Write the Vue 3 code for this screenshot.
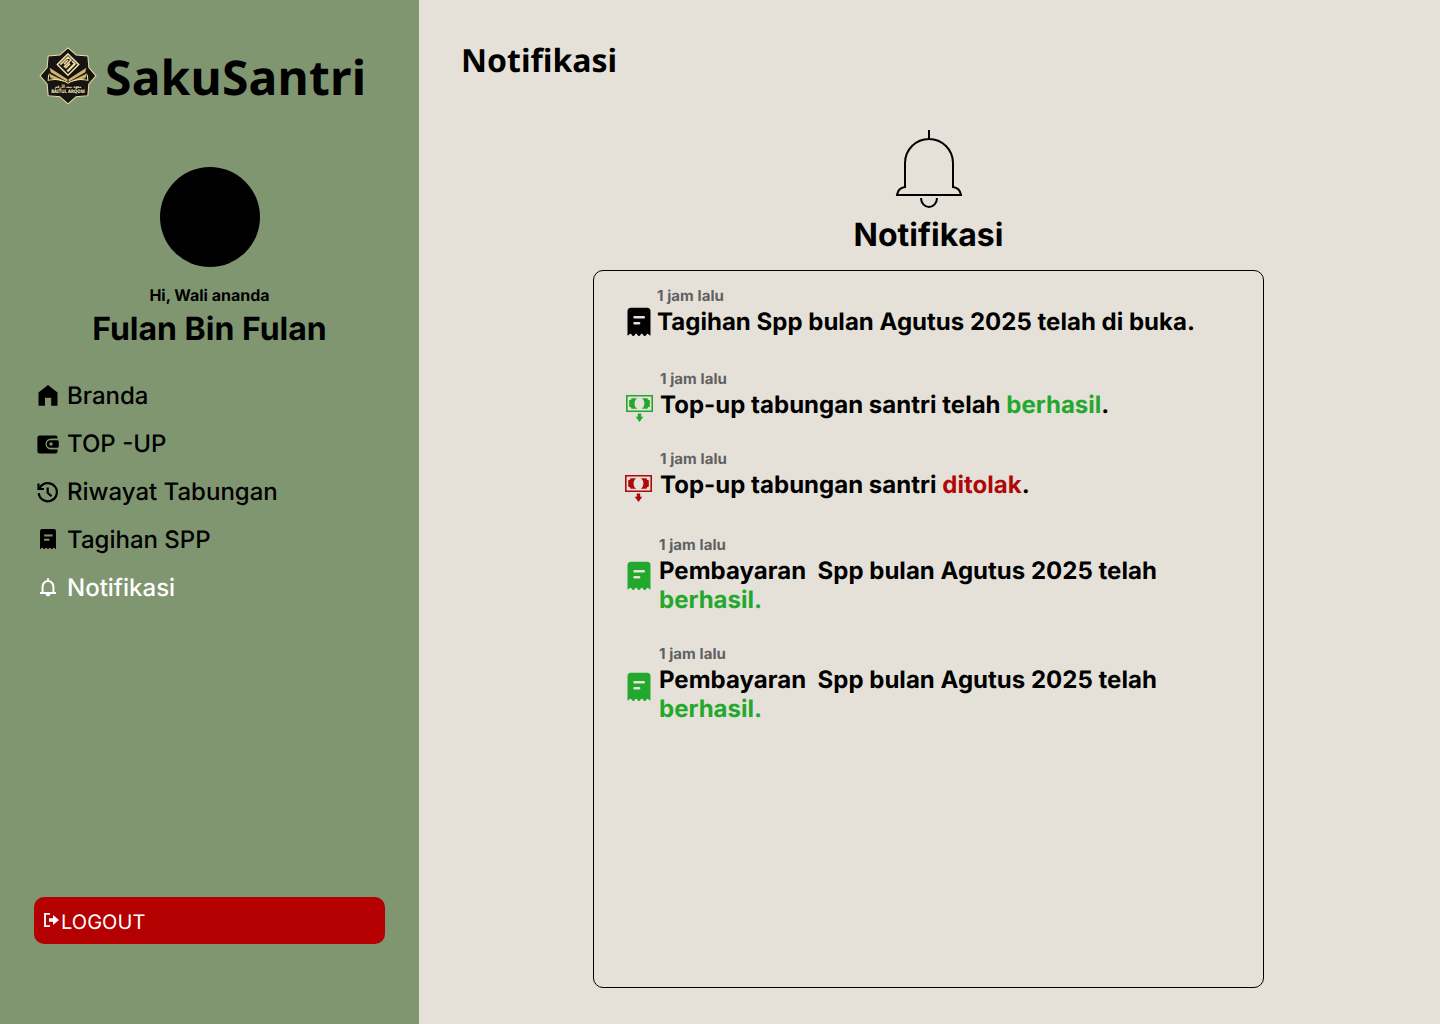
<script setup>
const menu = [
  { label: 'Branda', icon: 'home' },
  { label: 'TOP -UP', icon: 'wallet' },
  { label: 'Riwayat Tabungan', icon: 'history' },
  { label: 'Tagihan SPP', icon: 'receipt' },
  { label: 'Notifikasi', icon: 'bell', active: true },
]

const items = [
  { icon: 'receipt', tone: 'black', text: 'Tagihan Spp bulan Agutus 2025 telah di buka.', gap: 0, indent: 64, left: 33, iconTop: 20 },
  { icon: 'cash', tone: 'green', text: 'Top-up tabungan santri telah ', status: 'berhasil', end: '.', gap: 34, indent: 67, left: 32, iconTop: 25 },
  { icon: 'cash', tone: 'red', text: 'Top-up tabungan santri ', status: 'ditolak', end: '.', gap: 31, indent: 67, left: 31, iconTop: 25 },
  { icon: 'receipt', tone: 'green', text: 'Pembayaran  Spp bulan Agutus 2025 telah\n', status: 'berhasil.', gap: 37, indent: 66, left: 33, iconTop: 25 },
  { icon: 'receipt', tone: 'green', text: 'Pembayaran  Spp bulan Agutus 2025 telah\n', status: 'berhasil.', gap: 31, indent: 66, left: 33, iconTop: 27 },
]
</script>

<template>
  <div class="page">
    <aside class="sidebar">
      <div class="brand">
        <svg class="logo" viewBox="0.500 0.700 57 57" width="58" height="58">
          <path class="star" d="M29 1.500 37 8.500 48.500 9.500 49.500 21 56.500 29 49.500 37 48.500 48.500 37 49.500 29 56.500 21 49.500 9.500 48.500 8.500 37 1.500 29 8.500 21 9.500 9.500 21 8.500Z" />
          <g fill="none" stroke="#f2dfa4" stroke-width="1.500">
            <path d="M29 7.500 39.500 18 29 28.500 18.500 18Z" />
            <path d="M21.500 18 29 10.500 32 13.500 25 20.500M25 17.500 29 13.500M28 24.500 36 16.500M31 17 26.500 21.500M33 14.500l3 3-7 7" />
          </g>
          <g fill="#cfb36f">
            <path d="M11 21 28.500 32.500 28.500 35 12 25.500Z" /><path d="M47 21 29.500 32.500 29.500 35 46 25.500Z" />
            <path d="M10 26.500 28.500 35.500 12 31.500Z" /><path d="M48 26.500 29.500 35.500 46 31.500Z" />
          </g>
          <path d="M10 28 9.500 33.500Q21 31 29 36.500Q37 31 48.500 33.500L48 28" fill="none" stroke="#f2dfa4" stroke-width="1" />
          <text x="29" y="40.800" text-anchor="middle" textLength="26" lengthAdjust="spacingAndGlyphs" class="arabic">معهد بيت الأرقم</text>
          <text x="29" y="46" text-anchor="middle" textLength="33" lengthAdjust="spacingAndGlyphs" class="school">BAITUL ARQOM</text>
        </svg>
        <span class="name">SakuSantri</span>
      </div>
      <div class="avatar"></div>
      <p class="greeting">Hi, Wali ananda</p>
      <p class="user">Fulan Bin Fulan</p>
      <nav class="menu">
        <a v-for="m in menu" :key="m.label" :class="{ active: m.active }">
          <svg v-if="m.icon === 'home'" viewBox="0 0 24 24" width="24" height="24"><path d="M2.500 8.500 12 1l9.500 7.500v13.200h-6.300v-7.900H9v7.900H2.500Z" /></svg>
          <svg v-else-if="m.icon === 'wallet'" viewBox="0 0 24 24" width="24" height="24">
            <path d="M3.700 3.500h15.600a2.300 2.300 0 0 1 2.300 2.300v.7H15a5.500 5.500 0 0 0 0 11h6.600v1.700a2.300 2.300 0 0 1-2.300 2.300H3.700a2.300 2.300 0 0 1-2.300-2.300V5.800a2.300 2.300 0 0 1 2.300-2.300Z" />
            <path fill-rule="evenodd" d="M14.500 8.300h6.800a1.500 1.500 0 0 1 1.500 1.500v4.400a1.500 1.500 0 0 1-1.500 1.500h-6.800a3.700 3.700 0 0 1 0-7.400Zm.5 2a1.700 1.700 0 1 0 0 3.400 1.700 1.700 0 0 0 0-3.400Z" />
          </svg>
          <svg v-else-if="m.icon === 'history'" viewBox="0 0 24 24" width="24" height="24" class="line">
            <path d="M2.700 13.200a9.100 9.100 0 1 0 1.500-6.100L2.600 9" /><path d="M2.500 3.600V9H8M11.700 7.400v5.300l3.800 3.600" />
          </svg>
          <svg v-else-if="m.icon === 'receipt'" viewBox="-5 0 34 34" width="24" height="24">
            <path fill-rule="evenodd" d="M4 1.500h16A3.300 3.300 0 0 1 23.300 5v25l-3-2.500-2.900 2.500-2.700-2.500-2.700 2.500-2.700-2.500L6.600 30l-2.900-2.500L.7 30V5A3.300 3.300 0 0 1 4 1.500ZM6.500 9.300v2.800h12V9.300Zm0 6v2.800h7.500v-2.800Z" />
          </svg>
          <svg v-else viewBox="0 0 24 24" width="24" height="24" class="line thin">
            <path d="M4 17h16M6.600 17v-6.500a5.400 5.400 0 0 1 10.800 0V17M12 5V2.300" /><path class="solid" d="M9.600 18h4.800a2.400 2.400 0 0 1-4.800 0Z" />
          </svg>
          <span>{{ m.label }}</span>
        </a>
      </nav>
      <button class="logout">
        <svg viewBox="0 0 18 18" width="18" height="18">
          <path d="M8 2.900H3v12.200h5" fill="none" stroke="#fff" stroke-width="1.900" />
          <path d="M7 7.200h4V4l6 5-6 5v-3.200H7Z" fill="#fff" />
        </svg>
        <span>LOGOUT</span>
      </button>
    </aside>

    <main class="content">
      <h1>Notifikasi</h1>
      <svg class="big-bell" viewBox="0 0 68 80" width="68" height="80" fill="none" stroke="#000" stroke-width="2">
        <path d="M34 1v9M10 59V34a24 24 0 0 1 48 0v25M10 58q-7 1-8 8h64q-1-7-8-8M26 69a8 9 0 0 0 16 0" />
      </svg>
      <h2>Notifikasi</h2>
      <section class="panel">
        <article v-for="(n, i) in items" :key="i" :style="{ marginTop: n.gap + 'px', paddingLeft: n.indent - n.left - 24 + 'px', marginLeft: n.left + 24 + 'px' }">
          <div class="icon" :class="n.tone" :style="{ top: n.iconTop + 'px' }">
            <svg v-if="n.icon === 'receipt'" viewBox="0 0 24 30" width="24" height="30">
              <path fill-rule="evenodd" d="M4 .7h16a3.500 3.500 0 0 1 3.500 3.500v24.400c-1.500 0-1.700-1.900-2.900-1.900s-1.400 2.300-2.900 2.300-1.600-2.300-2.900-2.300-1.400 2.300-2.800 2.300-1.600-2.300-2.900-2.300S7.700 29 6.300 29s-1.600-2.300-2.900-2.300S2 28.600.5 28.600V4.200A3.500 3.500 0 0 1 4 .7ZM7.500 9a1.250 1.250 0 0 0 0 2.500h9.300a1.250 1.250 0 0 0 0-2.500Zm0 6a1.250 1.250 0 0 0 0 2.500h4.600a1.250 1.250 0 0 0 0-2.500Z" />
            </svg>
            <svg v-else viewBox="0 0 28 28" width="28" height="28">
              <path fill-rule="evenodd" d="M0 0h27v17H0ZM1.600 1.600v13.800h23.800V1.600Z" />
              <path d="M5.500 3.300h5.700C7.700 5.500 7.700 11.500 11.200 13.700H5.500c0-1.300-.9-2-2.300-2V5.300c1.400 0 2.300-.7 2.300-2ZM21.500 3.300h-5.700C19.300 5.500 19.300 11.500 15.800 13.700h5.700c0-1.300.9-2 2.300-2V5.300c-1.400 0-2.300-.7-2.300-2Z" />
              <path d="M11.800 18.500h3.400v3.300h2.100L13.500 27l-3.800-5.200h2.100Z" />
            </svg>
          </div>
          <p class="time">1 jam lalu</p>
          <p class="message">{{ n.text }}<span v-if="n.status" :class="n.tone">{{ n.status }}</span>{{ n.end }}</p>
        </article>
      </section>
    </main>
  </div>
</template>

<style>
body { margin: 0; }
</style>

<style scoped>
* { box-sizing: border-box; }
p, h1, h2 { margin: 0; }
.page { display: flex; width: 1440px; height: 1024px; background: #e5e0d8; color: #000; font-family: Inter, sans-serif; text-rendering: geometricPrecision; overflow: hidden; }
.sidebar { width: 419px; height: 100%; background: #809671; display: flex; flex-direction: column; align-items: center; padding: 44px 34px 80px; }
.brand { align-self: stretch; display: flex; height: 65px; padding-left: 5px; }
.logo { flex: none; margin-top: 3px; }
.star { fill: #151410; stroke: #eadca9; stroke-width: 1; }
.arabic { font: bold 4.500px "DejaVu Sans", sans-serif; fill: #f2dfa4; }
.school { font: bold 4.700px "Noto Sans", sans-serif; fill: #fff3c4; }
.name { margin-left: 8px; font: bold 48px/67px "Noto Sans", sans-serif; letter-spacing: .2px; }
.avatar { flex: none; width: 100px; height: 100px; margin-top: 58px; border-radius: 50%; background: #000; }
.greeting { margin-top: 19px; font-size: 16px; line-height: 19px; font-weight: 700; }
.user { margin-top: 4px; font-size: 32px; line-height: 39px; font-weight: 700; }
.menu { align-self: stretch; display: flex; flex-direction: column; gap: 19px; margin-top: 33px; padding-left: 2px; }
.menu a { display: flex; align-items: center; gap: 7px; height: 29px; font-size: 24px; line-height: 29px; font-weight: 500; white-space: nowrap; }
.menu svg { flex: none; fill: currentColor; }
.menu .line { fill: none; stroke: currentColor; stroke-width: 2.200; }
.menu .thin { stroke-width: 2; }
.menu .solid { fill: currentColor; stroke: none; }
.menu .active { color: #fff; }
.logout { width: 351px; height: 47px; flex: none; margin-top: auto; padding: 2px 0 0 8px; border: 0; border-radius: 10px; background: #b40000; color: #fff; display: flex; align-items: center; gap: 1px; font: 400 20px/24px Inter, sans-serif; letter-spacing: .05px; text-rendering: inherit; }
.logout svg { margin-top: -4px; }
.content { width: 1021px; display: flex; flex-direction: column; align-items: center; padding: 39px 2px 0 0; }
h1 { align-self: flex-start; margin-left: 42px; font: bold 32px/44px "Noto Sans", sans-serif; }
.big-bell { margin-top: 46px; }
h2 { margin-top: 6px; font-size: 32px; line-height: 39px; font-weight: 700; }
.panel { width: 671px; height: 718px; margin-top: 16px; padding-top: 16px; border: 1px solid #000; border-radius: 10px; }
article { position: relative; }
.icon { position: absolute; left: -24px; height: 30px; }
.icon svg { display: block; fill: currentColor; }
.time { margin-left: -1px; font-size: 15px; line-height: 17px; font-weight: 700; letter-spacing: .08px; color: #606060; }
.message { margin-top: 3px; margin-left: -1px; font-size: 24px; line-height: 29px; font-weight: 700; letter-spacing: .02px; white-space: pre; }
.black { color: #000; }
.green { color: #22a92d; }
.red { color: #ad0909; }
</style>
